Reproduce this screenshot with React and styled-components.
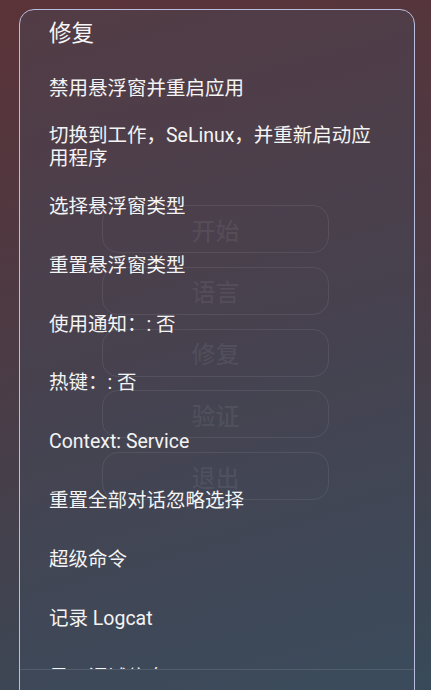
import React from "react";
import styled, { createGlobalStyle } from "styled-components";

const GlobalStyle = createGlobalStyle`
  html, body {
    margin: 0;
    padding: 0;
    height: 100%;
    overflow: hidden;
  }

  body {
    font-family: Roboto, "Noto Sans CJK SC", sans-serif;
    background: linear-gradient(165deg, #5b3338 0%, #4b3b45 45%, #384a59 100%);
  }
`;

const Screen = styled.div`
  position: relative;
  width: 431px;
  height: 690px;
  overflow: hidden;
`;

const MainMenu = styled.div`
  display: flex;
  flex-direction: column;
  align-items: center;
  gap: 13.75px;
  padding-top: 205px;
`;

const MenuButton = styled.div`
  box-sizing: border-box;
  width: 227px;
  height: 48px;
  border: 1.5px solid rgba(255, 255, 255, 0.11);
  border-radius: 16px;
  display: flex;
  align-items: center;
  justify-content: center;
  color: rgba(255, 255, 255, 0.09);
  font-size: 24px;
  font-weight: 500;
`;

const Dialog = styled.div`
  position: absolute;
  top: 9px;
  left: 19px;
  box-sizing: border-box;
  width: 396px;
  height: 760px;
  border: 1.5px solid #b9bde0;
  border-radius: 15px;
  background: rgba(66, 80, 98, 0.3);
  display: flex;
  flex-direction: column;
`;

const Title = styled.div`
  box-sizing: border-box;
  height: 49px;
  padding: 8px 29px 0;
  font-size: 22.5px;
  line-height: 30px;
  color: #f6f6f6;
`;

const List = styled.div`
  height: 609.5px;
  overflow: hidden;
  flex: 0 0 auto;
`;

const Item = styled.div`
  box-sizing: border-box;
  min-height: 58.9px;
  padding: 6px 30px 6px 29px;
  display: flex;
  align-items: center;
  font-size: 19.5px;
  line-height: 23px;
  color: #f4f4f4;
`;

const Divider = styled.div`
  height: 1px;
  background: rgba(255, 255, 255, 0.11);
`;

const Footer = styled.div`
  height: 80px;
`;

const buttons = ["开始", "语言", "修复", "验证", "退出"];

const items = [
  "禁用悬浮窗并重启应用",
  "切换到工作，SeLinux，并重新启动应用程序",
  "选择悬浮窗类型",
  "重置悬浮窗类型",
  "使用通知：: 否",
  "热键：: 否",
  "Context: Service",
  "重置全部对话忽略选择",
  "超级命令",
  "记录 Logcat",
  "显示调试信息",
];

const App = () => {
  return (
    <Screen>
      <GlobalStyle />
      <MainMenu>
        {buttons.map((b) => (
          <MenuButton key={b}>{b}</MenuButton>
        ))}
      </MainMenu>
      <Dialog>
        <Title>修复</Title>
        <List>
          {items.map((t) => (
            <Item key={t}>
              <span>{t}</span>
            </Item>
          ))}
        </List>
        <Divider />
        <Footer />
      </Dialog>
    </Screen>
  );
};

export default App;
